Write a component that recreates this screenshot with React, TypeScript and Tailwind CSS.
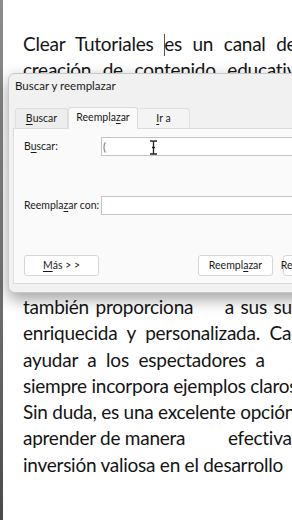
import type { ReactNode } from "react";

// Word-style page with the "Buscar y reemplazar" dialog floating on top.

const lineBase =
  "h-[26.3px] leading-[26.3px] whitespace-nowrap text-[19px] tracking-[-0.25px] text-[#141414]";

function Underline({ children }: { children: ReactNode }) {
  return <span className="underline underline-offset-2">{children}</span>;
}

function Field({ label, first }: { label: ReactNode; first?: boolean }) {
  return (
    <div className={["flex items-center", first ? "mt-[8px]" : "mt-[40px]"].join(" ")}>
      <div className="w-[77px] shrink-0 whitespace-nowrap text-[10.5px] text-[#1a1a1a]">{label}</div>
      <div className="relative h-[19px] flex-1 border border-[#c4c4c4] bg-white">
        {first && (
          <>
            <span className="absolute left-[1px] top-[2px] text-[11px] leading-[13px] text-[#666]">
              (
            </span>
            <svg
              className="absolute left-[47px] top-[2px]"
              width="9"
              height="15"
              viewBox="0 0 9 15"
            >
              <path
                d="M1 1h2.5c.6 0 1 .4 1 1v11c0 .6.4 1 1 1H8M8 1H5.5c-.6 0-1 .4-1 1M4.5 13c0 .6-.4 1-1 1H1M3 7.5h3"
                stroke="#222"
                strokeWidth="1.3"
                fill="none"
              />
            </svg>
          </>
        )}
      </div>
    </div>
  );
}

function DialogButton({ children, className = "" }: { children: ReactNode; className?: string }) {
  return (
    <div
      className={[
        "h-[21px] w-[75px] shrink-0 rounded-[3px] border border-[#d6d6d6] bg-white flex items-center justify-center whitespace-nowrap text-[10.5px] text-[#1a1a1a]",
        className,
      ].join(" ")}
    >
      {children}
    </div>
  );
}

function FindReplaceDialog() {
  return (
    <div className="absolute left-[8px] top-[73px] w-[310px] rounded-[7px] border border-[#c8c8c8] bg-[#f1f1f1] pb-[8px] shadow-[0_6px_16px_rgba(0,0,0,0.38)] font-['Lato',sans-serif]">
      <div className="h-[24px] pl-[6px] flex items-center text-[11.5px] text-[#1a1a1a]">
        Buscar y reemplazar
      </div>

      {/* tabs */}
      <div className="mt-[8px] ml-[6px] flex items-end h-[22px] text-[10.5px] text-[#1a1a1a]">
        <div className="h-[20px] w-[53px] border border-b-0 border-[#dedede] bg-[#ededed] flex items-center justify-center rounded-t-[3px]">
          <Underline>B</Underline>uscar
        </div>
        <div className="h-[22px] w-[70px] border border-b-0 border-[#dcdcdc] bg-[#fafafa] flex items-center justify-center rounded-t-[3px] -mb-px relative z-10 pb-[2px]">
          Reempla<Underline>z</Underline>ar
        </div>
        <div className="h-[20px] w-[52px] border border-b-0 border-l-0 border-[#dedede] bg-[#f4f4f4] flex items-center justify-center rounded-t-[3px]">
          <Underline>I</Underline>r a
        </div>
      </div>

      {/* panel */}
      <div className="ml-[4px] border border-[#dcdcdc] bg-[#fafafa] pl-[10px] pb-[7px]">
        <Field
          first
          label={
            <>
              B<Underline>u</Underline>scar:
            </>
          }
        />
        <Field
          label={
            <>
              Reempla<Underline>z</Underline>ar con:
            </>
          }
        />
        <div className="mt-[40px] flex">
          <DialogButton>
            <Underline>M</Underline>ás &gt; &gt;
          </DialogButton>
          <DialogButton className="ml-[99px]">
            Reempl<Underline>a</Underline>zar
          </DialogButton>
          <DialogButton className="ml-[10px]">
            Reemplazar <Underline>t</Underline>odos
          </DialogButton>
        </div>
      </div>
    </div>
  );
}

export default function App() {
  return (
    <div className="relative w-[292px] h-[520px] overflow-hidden bg-white">
      <div className="flex h-full">
        <div className="w-[3px] shrink-0 bg-gradient-to-b from-[#8c8c8c] via-[#777] to-[#4a4a4a]" />
        <div className="flex-1 pl-[20px] pt-[31px] font-['Lato',sans-serif]">
          <div className={`${lineBase} [word-spacing:6px]`}>
            Clear Tutoriales{" "}
            <span className="inline-block w-px h-[22px] bg-[#555] align-[-5px] -mr-px" />
            es un canal de
          </div>
          <div className={`${lineBase} [word-spacing:7px]`}>
            creación de contenido educativo
          </div>
          <div className={lineBase}>en español sobre tecnología y</div>
          <div className={lineBase}>programas de oficina. Con una</div>
          <div className={lineBase}>gran variedad de tutoriales</div>
          <div className={lineBase}>prácticos y fáciles de seguir,</div>
          <div className={lineBase}>el canal ayuda a mejorar las</div>
          <div className={lineBase}>habilidades de sus usuarios.</div>
          <div className={lineBase}>Además del contenido, el canal</div>
          <div className={lineBase}>ofrece una experiencia</div>
          <div className={`${lineBase} [word-spacing:2px]`}>
            también proporciona
            <span className="inline-block w-[25px]" /> a sus suscriptores
          </div>
          <div className={`${lineBase} [word-spacing:5px]`}>
            enriquecida y personalizada. Cada
          </div>
          <div className={`${lineBase} [word-spacing:5px]`}>ayudar a los espectadores a</div>
          <div className={lineBase}>siempre incorpora ejemplos claros</div>
          <div className={lineBase}>Sin duda, es una excelente opción</div>
          <div className={lineBase}>
            aprender de manera
            <span className="inline-block w-[38px]" /> efectiva
          </div>
          <div className={lineBase}>inversión valiosa en el desarrollo</div>
        </div>
      </div>
      <FindReplaceDialog />
    </div>
  );
}
